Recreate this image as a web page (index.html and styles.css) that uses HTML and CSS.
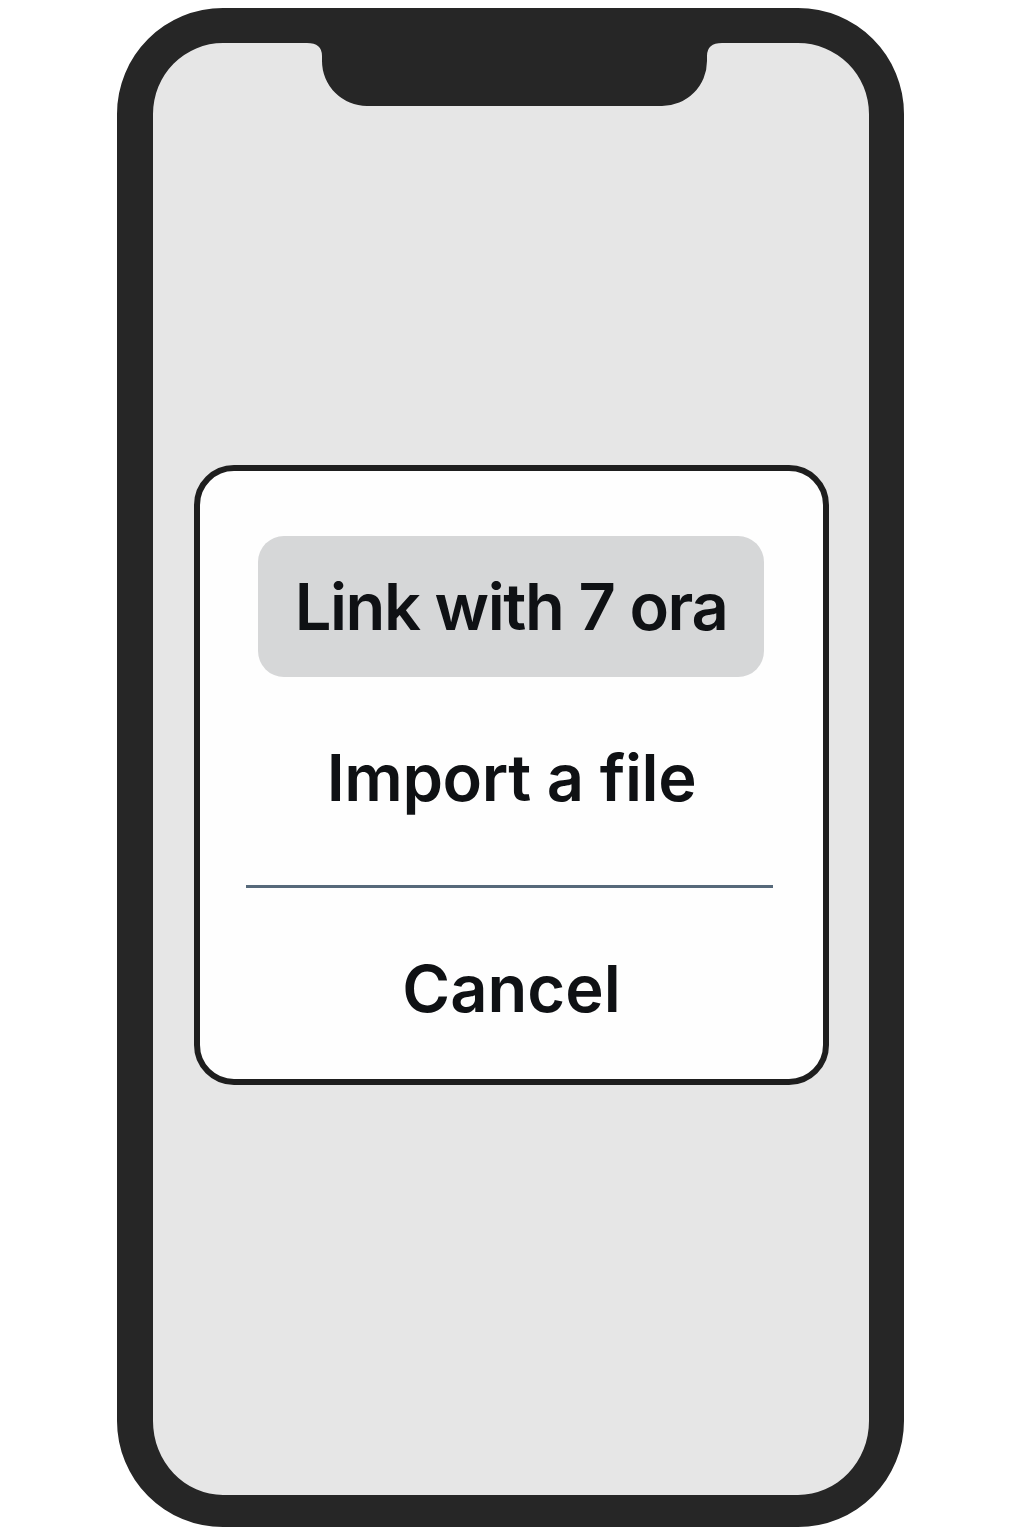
FILE: index.html
```html
<html>

<head>
    <title>Import sheet</title>
    <link rel="stylesheet" href="styles.css">
</head>

<body>
    <div class="phone">
        <!-- Вырез сверху экрана -->
        <svg class="notch" width="415" height="63" viewBox="0 0 415 63">
            <path d="M0 0 H415 Q400 0 400 13 V18 A45 45 0 0 1 355 63 H60 A45 45 0 0 1 15 18 V13 Q15 0 0 0 Z" fill="#262626" />
        </svg>

        <div class="screen">
            <div class="sheet">
                <button class="sheet-button">Link with 7 ora</button>
                <div class="sheet-item">Import a file</div>
                <div class="divider"></div>
                <div class="sheet-item cancel">Cancel</div>
            </div>
        </div>
    </div>
</body>

</html>
```

FILE: styles.css
```css
body {
    margin: 0;
    padding: 8px 0 0 117px;
    background-color: #fff;
    font-family: Inter, "Noto Sans", Arial, sans-serif;
}

.phone {
    position: relative;
    box-sizing: border-box;
    width: 787px;
    height: 1519px;
    border-style: solid;
    border-color: #262626;
    border-width: 35px 35px 32px 36px;
    border-radius: 106px;
    background-color: #e6e6e6;
    overflow: hidden;
}

.notch {
    position: absolute;
    top: 0;
    left: 154px;
    display: block;
}

.screen {
    height: 100%;
    display: flex;
    align-items: center;
    justify-content: center;
}

/* Окно выбора действия */
.sheet {
    box-sizing: border-box;
    width: 635px;
    height: 620px;
    margin-top: 12px;
    margin-left: 1px;
    border: 6px solid #1e1e1e;
    border-radius: 40px;
    background-color: #fefefe;
    display: flex;
    flex-direction: column;
}

.sheet-button {
    width: 506px;
    height: 141px;
    margin: 65px 0 0 58px;
    padding: 0;
    border: none;
    border-radius: 26px;
    background-color: #d6d7d8;
    color: #0f1114;
    font-family: inherit;
    font-size: 65px;
    font-weight: 600;
    letter-spacing: -1.4px;
    line-height: 1;
    cursor: pointer;
}

.sheet-item {
    height: 200px;
    display: flex;
    align-items: center;
    justify-content: center;
    color: #0f1114;
    font-size: 65px;
    font-weight: 600;
    letter-spacing: -0.4px;
    line-height: 1;
}

.divider {
    height: 3px;
    margin: 8px 50px 10px 46px;
    background-color: #56697a;
}

.cancel {
    height: 180px;
    letter-spacing: 0;
}
```
